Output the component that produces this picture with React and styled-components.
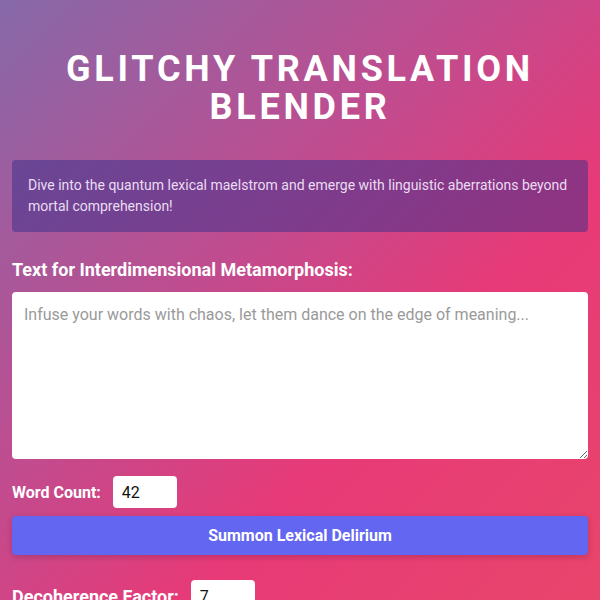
import styled, { createGlobalStyle } from 'styled-components';

const GlobalStyle = createGlobalStyle`
	html, body {
		margin: 0;
		padding: 0;
	}
	body {
		font-family: Roboto, 'Liberation Sans', sans-serif;
		background: linear-gradient(135deg, #8669a9 0%, #c04c8f 40%, #e73a78 65%, #e8456b 100%);
		background-attachment: fixed;
		min-height: 100vh;
		color: white;
	}
`;

const Page = styled.div`
	padding: 50px 12px 40px;
	display: flex;
	flex-direction: column;
`;

const Title = styled.h1`
	margin: 0 0 34px;
	font-size: 36px;
	line-height: 38px;
	font-weight: 700;
	letter-spacing: 3.75px;
	text-transform: uppercase;
	text-align: center;
	color: #fff;
`;

const Intro = styled.p`
	margin: 0 0 27px;
	padding: 15px 16px;
	font-size: 14px;
	line-height: 21px;
	color: #eadcf2;
	background: rgba(55, 45, 140, 0.5);
	border-radius: 4px;
`;

const FieldLabel = styled.label`
	display: block;
	font-size: 18px;
	font-weight: 700;
	line-height: 22px;
	margin-bottom: 11px;
`;

const TextArea = styled.textarea`
	box-sizing: border-box;
	width: 100%;
	height: 167px;
	padding: 12px;
	border: none;
	border-radius: 4px;
	font-family: Roboto, 'Liberation Sans', sans-serif;
	font-size: 16px;
	line-height: 22px;
	background: #fff;
	color: #222;
	margin: 0 0 17px;
	display: block;
	&::placeholder {
		color: #9a9a9a;
	}
`;

const Row = styled.div`
	display: flex;
	align-items: center;
	gap: 12px;
	margin-bottom: ${(props) => props.gap || '8px'};
`;

const RowLabel = styled.span`
	font-size: ${(props) => (props.large ? '18px' : '16px')};
	font-weight: 700;
`;

const NumberBox = styled.input`
	box-sizing: border-box;
	width: 64px;
	height: 32px;
	padding: 0 9px;
	border: none;
	border-radius: 4px;
	font-family: Roboto, 'Liberation Sans', sans-serif;
	font-size: 16px;
	color: #111;
	background: #fff;
`;

const Button = styled.button`
	width: 100%;
	height: 39px;
	border: none;
	border-radius: 4px;
	background: #6366f1;
	color: #fff;
	font-family: Roboto, 'Liberation Sans', sans-serif;
	font-size: 16px;
	font-weight: 700;
	cursor: pointer;
	box-shadow: 0 2px 6px rgba(0, 0, 0, 0.18);
	margin-bottom: 25px;
`;

export default function App() {
	return (
		<>
			<GlobalStyle />
			<Page>
				<Title>
					Glitchy Translation
					<br />
					Blender
				</Title>
				<Intro>
					Dive into the quantum lexical maelstrom and emerge with linguistic
					aberrations beyond mortal comprehension!
				</Intro>
				<FieldLabel htmlFor="source">
					Text for Interdimensional Metamorphosis:
				</FieldLabel>
				<TextArea
					id="source"
					placeholder="Infuse your words with chaos, let them dance on the edge of meaning..."
				/>
				<Row>
					<RowLabel>Word Count:</RowLabel>
					<NumberBox type="text" defaultValue="42" />
				</Row>
				<Button>Summon Lexical Delirium</Button>
				<Row gap="20px">
					<RowLabel large>Decoherence Factor:</RowLabel>
					<NumberBox type="text" defaultValue="7" />
				</Row>
			</Page>
		</>
	);
}
